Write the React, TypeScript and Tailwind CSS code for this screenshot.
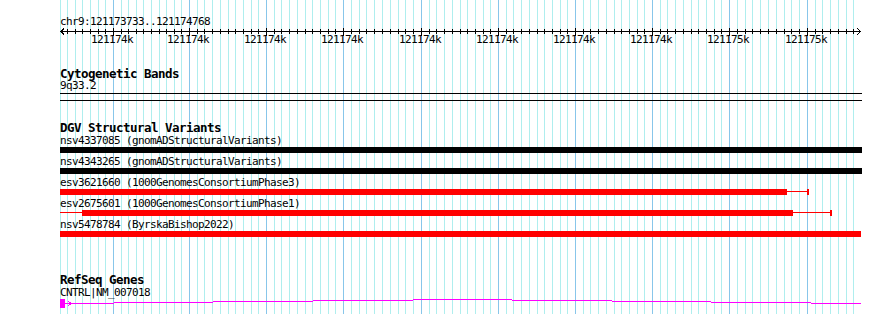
import React from "react";

const DARK = [113, 189, 266, 343, 421, 498, 575, 652, 729, 807];

function lightLines(): number[] {
  const out: number[] = [60];
  for (let j = 6; j >= 1; j--) out.push(Math.round(113 - j * 7.7));
  for (let i = 0; i < DARK.length - 1; i++) {
    for (let j = 1; j < 10; j++) out.push(Math.round(DARK[i] + (j * (DARK[i + 1] - DARK[i])) / 10));
  }
  for (let j = 1; j <= 6; j++) out.push(Math.round(807 + j * 7.7));
  return out;
}

const LIGHT = lightLines();
const LABELS = [
  "121174k",
  "121174k",
  "121174k",
  "121174k",
  "121174k",
  "121174k",
  "121174k",
  "121174k",
  "121175k",
  "121175k",
];

const small = "h-[12px] text-[11px] tracking-[-0.62px] leading-[14px] whitespace-pre";
const bold = "h-[12px] text-[12.5px] tracking-[-0.53px] leading-[14px] font-bold whitespace-pre";

const STEPS: [number, number, number][] = [
  [64, 114, 303],
  [114, 213, 302],
  [213, 313, 301],
  [313, 413, 300],
  [413, 512, 299],
  [512, 612, 300],
  [612, 711, 301],
  [711, 811, 302],
  [811, 861, 303],
];

function Feature({ label, children }: { label: string; children: React.ReactNode }) {
  return (
    <div className="flex flex-col">
      <div className={small}>{label}</div>
      <div className="mt-[1px] mb-[2px] flex h-[6px] items-start">{children}</div>
    </div>
  );
}

export default function App() {
  return (
    <div className="relative h-[314px] w-[890px] overflow-hidden bg-white">
      <svg className="absolute left-0 top-0" width={890} height={314} shapeRendering="crispEdges">
        {LIGHT.map((x, i) => (
          <rect key={"l" + i} x={x} y={0} width={1} height={314} fill="#afeeee" />
        ))}
        {DARK.map((x, i) => (
          <rect key={"d" + i} x={x} y={0} width={1} height={314} fill="#88c6ea" />
        ))}
      </svg>

      <div className="relative flex flex-col pl-[60px] font-['DejaVu_Sans_Mono',monospace] text-black">
        <div className={"mt-[15px] " + small}>chr9:121173733..121174768</div>

        <svg className="mt-[1px] block" width={830} height={8} viewBox="60 28 830 8" shapeRendering="crispEdges">
          <rect x={60} y={31} width={801} height={1} fill="#000" />
          {LIGHT.slice(1).map((x, i) => (
            <rect key={"t" + i} x={x} y={29} width={1} height={5} fill="#000" />
          ))}
          {DARK.map((x, i) => (
            <rect key={"T" + i} x={x} y={28} width={1} height={8} fill="#000" />
          ))}
          <rect x={61} y={30} width={1} height={3} fill="#000" />
          <rect x={62} y={29} width={1} height={5} fill="#000" />
          <rect x={63} y={28} width={1} height={2} fill="#000" />
          <rect x={63} y={33} width={1} height={2} fill="#000" />
          <rect x={859} y={30} width={1} height={3} fill="#000" />
          <rect x={858} y={29} width={1} height={1} fill="#000" />
          <rect x={858} y={33} width={1} height={1} fill="#000" />
          <rect x={857} y={28} width={1} height={1} fill="#000" />
          <rect x={857} y={34} width={1} height={1} fill="#000" />
        </svg>

        <div className="relative -mt-[3px] h-[13px]">
          {DARK.map((x, i) => (
            <span
              key={"lab" + i}
              className="absolute top-0 text-[11px] tracking-[-0.62px] leading-[14px]"
              style={{ left: x - 22 - 60 }}
            >
              {LABELS[i]}
            </span>
          ))}
        </div>

        <div className={"mt-[21px] " + bold}>Cytogenetic Bands</div>
        <div className={small}>9q33.2</div>
        <div className="mt-[2px] h-[8px] w-[802px] border-y border-black" />

        <div className={"mt-[20px] " + bold}>DGV Structural Variants</div>
        <div className="mt-[1px] flex flex-col">
          <Feature label="nsv4337085 (gnomADStructuralVariants)">
            <div className="h-[6px] w-[802px] bg-black" />
          </Feature>
          <Feature label="nsv4343265 (gnomADStructuralVariants)">
            <div className="h-[6px] w-[802px] bg-black" />
          </Feature>
          <Feature label="esv3621660 (1000GenomesConsortiumPhase3)">
            <div className="h-[6px] w-[727px] bg-[#ff0000]" />
            <div className="mt-[2px] h-px w-[20px] bg-[#ff0000]" />
            <div className="h-[6px] w-[2px] bg-[#ff0000]" />
          </Feature>
          <Feature label="esv2675601 (1000GenomesConsortiumPhase1)">
            <div className="mt-[2px] h-px w-[22px] bg-[#ff0000]" />
            <div className="h-[6px] w-[711px] bg-[#ff0000]" />
            <div className="mt-[2px] h-px w-[37px] bg-[#ff0000]" />
            <div className="h-[6px] w-[2px] bg-[#ff0000]" />
          </Feature>
          <Feature label="nsv5478784 (ByrskaBishop2022)">
            <div className="h-[6px] w-[801px] bg-[#ff0000]" />
          </Feature>
        </div>

        <div className={"mt-[34px] " + bold}>RefSeq Genes</div>
        <div className={"mt-[1px] " + small}>CNTRL|NM_007018</div>
        <svg className="block" width={830} height={14} viewBox="60 298 830 14" shapeRendering="crispEdges">
          <rect x={60} y={299} width={5} height={9} fill="#ff00ff" />
          {STEPS.map(([a, b, y], i) => (
            <rect key={"s" + i} x={a} y={y} width={b - a} height={1} fill="#ff00ff" />
          ))}
          <rect x={68} y={301} width={1} height={1} fill="#ff00ff" />
          <rect x={69} y={302} width={2} height={1} fill="#ff00ff" />
          <rect x={71} y={303} width={1} height={1} fill="#ff00ff" />
          <rect x={69} y={304} width={2} height={1} fill="#ff00ff" />
          <rect x={68} y={305} width={1} height={1} fill="#ff00ff" />
        </svg>
      </div>
    </div>
  );
}
